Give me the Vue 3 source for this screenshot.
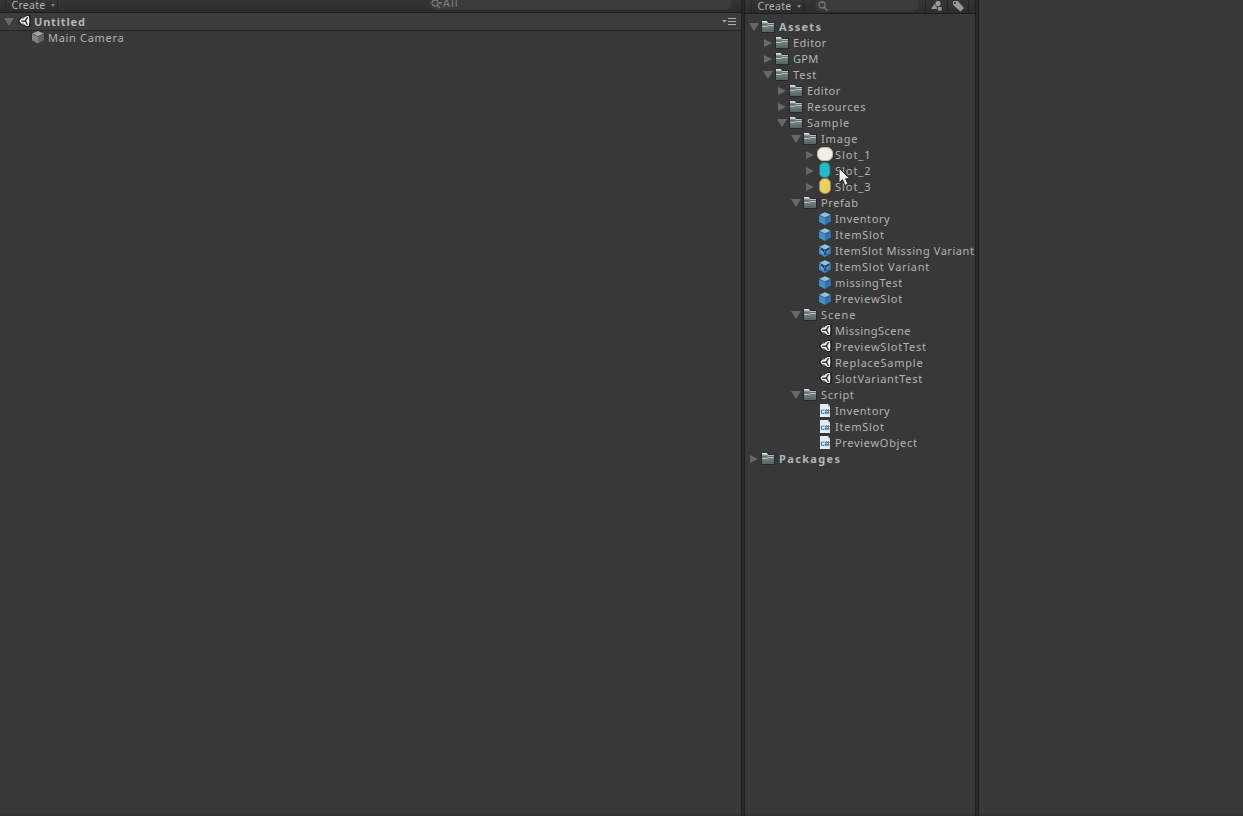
<script setup>
const tree = [
  ['Assets', 0, 'folder', 'open', 1.28, true], ['Editor', 1, 'folder', 'closed', 0.48], ['GPM', 1, 'folder', 'closed', 0.3],
  ['Test', 1, 'folder', 'open', 0.85], ['Editor', 2, 'folder', 'closed', 0.48], ['Resources', 2, 'folder', 'closed', 0.7],
  ['Sample', 2, 'folder', 'open', 0.78], ['Image', 3, 'folder', 'open', 0.82],
  ['Slot_1', 4, 'white', 'closed', 0.95], ['Slot_2', 4, 'cyan', 'closed', 0.95], ['Slot_3', 4, 'yellow', 'closed', 0.95],
  ['Prefab', 3, 'folder', 'open', 0.6], ['Inventory', 4, 'cube', '', 0.6], ['ItemSlot', 4, 'cube', '', 0.75],
  ['ItemSlot Missing Variant', 4, 'variant', '', 0.56], ['ItemSlot Variant', 4, 'variant', '', 0.72],
  ['missingTest', 4, 'cube', '', 0.63], ['PreviewSlot', 4, 'cube', '', 0.76],
  ['Scene', 3, 'folder', 'open', 0.98], ['MissingScene', 4, 'unity', '', 0.46], ['PreviewSlotTest', 4, 'unity', '', 0.76],
  ['ReplaceSample', 4, 'unity', '', 0.75], ['SlotVariantTest', 4, 'unity', '', 0.72],
  ['Script', 3, 'folder', 'open', 0.68], ['Inventory', 4, 'script', '', 0.6], ['ItemSlot', 4, 'script', '', 0.75], ['PreviewObject', 4, 'script', '', 0.69],
  ['Packages', 0, 'folder', 'closed', 1.36, true],
].map(([name, depth, icon, arrow, tracking, bold]) => ({ name, depth, icon, arrow, tracking, bold }))
</script>

<template>
  <svg class="defs" width="0" height="0">
    <defs>
      <linearGradient id="fg" x2="0" y2="1"><stop stop-color="#8e9b9e" /><stop offset="1" stop-color="#566266" /></linearGradient>
      <symbol id="folder" viewBox="0 0 16 16">
        <path d="M1 4V3Q1 2 2 2h5q1 0 1 1h6q1 0 1 1v9q0 1-1 1H2q-1 0-1-1z" fill="#252828" />
        <path d="M2 2h5l1 2h6v9H2z" fill="url(#fg)" />
        <path d="M2 2h5v1.5H2z" fill="#dcdfdc" />
        <path d="M2 3.5h5.5l.5 1h6" fill="none" stroke="#b9c1c1" stroke-width="1" />
        <path d="M2 5.5h4.5M8 5.5h6" stroke="#616d70" stroke-width="1" />
        <path d="M2 7.5h5l1-1h6" fill="none" stroke="#b4bdbe" stroke-width="1" />
      </symbol>
      <symbol id="cube" viewBox="0 0 16 16">
        <path d="M8 1l6.5 3v7L8 14.5 1.5 11V4z" fill="#233947" />
        <path d="M8 1.3l5.7 2.5L8 6.5 2.3 3.8z" fill="#8bc5d8" />
        <path d="M2 4.3l6 2.6v7l-6-3.2z" fill="#4a8cc5" />
        <path d="M14 4.3L8 6.9v7l6-3.2z" fill="#3970aa" />
      </symbol>
      <symbol id="variant" viewBox="0 0 16 16">
        <use href="#cube" />
        <path d="M4 6l2.5 1v2M12 6L9 7.2v1.6M8 9v3" fill="none" stroke="#24425a" stroke-width="1.5" />
        <path d="M4 8.5l2.5 1.8M9.5 10L12 7" stroke="#8abddb" />
      </symbol>
      <symbol id="graycube" viewBox="0 0 16 16">
        <path d="M8 .7l6.5 2.8v7L8 14.5l-6.5-4v-7z" fill="#292929" />
        <path d="M8 1L14 3.5 8 6.2 2 3.5z" fill="#a2a2a2" />
        <path d="M2 4l6 2.7v7L2 10.2z" fill="#858585" />
        <path d="M14 4L8 6.7v7l6-3.5z" fill="#666" />
      </symbol>
      <symbol id="unity" viewBox="0 0 16 16">
        <path d="M1.8 7L5 3.4 12.6.7l1.6.8.5 5.5-.5 5.5-1.6.8L5 10.8z" fill="#141414" />
        <path d="M3.2 7L6 3.7l6-1.9 1 .6.4 4.6-.4 4.6-1 .6-6-1.9z" fill="#f0f0ec" />
        <path d="M5.2 7h4.2l2.1-3.8M9.4 7l2.1 3.8" fill="none" stroke="#141414" stroke-width="1.25" />
        <path d="M6.4 4.6L8.7 3M6.4 9.4L8.7 11" fill="none" stroke="#141414" stroke-width=".9" />
      </symbol>
      <symbol id="script" viewBox="0 0 16 16">
        <path d="M3 1h8l2 2.5V14H3z" fill="#e9ebea" />
        <path d="M11 1v2.5h2z" fill="#a4a9aa" />
        <path d="M7.2 7H5.5Q4.3 7 4.3 8v1.5q0 1 1.2 1h1.7M9.2 6l-.5 5.2M11.5 6l-.5 5.2M7.8 7.5h4.8M7.6 9.7h4.8" fill="none" stroke="#4a80ad" stroke-width="1.2" />
      </symbol>
      <symbol id="white" viewBox="0 0 16 16"><rect x=".5" y=".5" width="15" height="13" rx="5.5" fill="#eeefe9" stroke="#c8bd85" /></symbol>
      <symbol id="cyan" viewBox="0 0 16 16"><rect x="2.5" y="-.5" width="10.5" height="15" rx="4.5" fill="#29b7cc" stroke="#23717a" /></symbol>
      <symbol id="yellow" viewBox="0 0 16 16"><rect x="2.5" y="-.5" width="11" height="15" rx="5" fill="#e9cf69" stroke="#9b8547" /></symbol>
    </defs>
  </svg>
  <main class="window">
    <section class="hierarchy">
      <header class="toolbar left-tools">
        <button class="create">Create<i class="caret" /></button>
        <div class="search all">
          <svg width="13" height="11"><circle cx="5" cy="4" r="3" /><path d="M7 6l3 3" /><path class="solid" d="M8 3h4.5L10.2 5.5z" /></svg>All
        </div>
      </header>
      <div class="scene">
        <i class="arrow open" />
        <svg class="icon"><use href="#unity" /></svg>
        <b>Untitled</b>
        <svg class="menu" width="14" height="9"><path d="M0 3h5L2.5 5.5z" fill="#aaa" /><path d="M6 1.5h8M6 4.5h8M6 7.5h8" stroke="#aaa" /></svg>
      </div>
      <div class="camera"><svg class="icon"><use href="#graycube" /></svg><span>Main Camera</span></div>
    </section>
    <div class="divider" />
    <section class="project">
      <header class="toolbar right-tools">
        <button class="create">Create<i class="caret" /></button>
        <div class="search"><svg width="11" height="11"><circle cx="4" cy="4" r="3" /><path d="M6 6l3.5 3.5" /></svg></div>
        <button class="tool"><svg width="14" height="12"><path d="M1 8l3.5-5L8 8z" /><circle cx="8" cy="2.5" r="2.6" /><path class="gap" d="M7.5 5.5h4.5v4.5H7.5z" /></svg></button>
        <button class="tool"><svg width="14" height="12"><path fill-rule="evenodd" d="M1 0h5l6 7-3.5 3.5L1 4zM3 1a1 1 0 100 2 1 1 0 000-2z" /></svg></button>
      </header>
      <div class="tree">
        <div v-for="(item, n) in tree" :key="n" class="row" :class="['depth' + item.depth, { bold: item.bold }]">
          <i class="arrow" :class="item.arrow" />
          <svg class="icon"><use :href="'#' + item.icon" /></svg>
          <span :style="{ letterSpacing: item.tracking + 'px' }">{{ item.name }}</span>
        </div>
      </div>
    </section>
    <div class="divider" />
    <aside />
    <svg class="cursor" width="13" height="20" viewBox="0 0 13 20"><path d="M1 1v15l3.5-3.2L7 18.5l3-1.3-2.4-5.4H12z" fill="#f1f1f1" stroke="#222" /></svg>
  </main>
</template>

<style>
body { margin: 0; background: #383838; overflow: hidden; }
</style>
<style scoped>
.defs { position: absolute; }
.window { position: relative; display: flex; width: 1243px; height: 816px; overflow: hidden; background: linear-gradient(#383838 813px, #363536 814px, #342f31); color: #b4b4b4; font: 11px/16px "Noto Sans", sans-serif; letter-spacing: .82px; white-space: nowrap; }
.hierarchy { width: 741px; flex: none; }
.divider { box-sizing: border-box; width: 4px; height: 816px; flex: none; border: solid #1f1f1f; border-width: 0 1px; background: #292929; }
.project { width: 230px; flex: none; }
aside { flex: 1; }
.toolbar { display: flex; box-sizing: border-box; overflow: hidden; background: linear-gradient(#353535, #2c2c2c); border-bottom: 1px solid #1d1d1d; }
.left-tools { height: 13px; }
.right-tools { height: 14px; }
button { padding: 0; border: 0; background: none; color: inherit; font: inherit; letter-spacing: inherit; }
.create { display: flex; align-items: center; box-sizing: border-box; height: 16px; border: solid #252525; border-width: 0 1px; font-size: 10.5px; letter-spacing: .3px; }
.left-tools .create { width: 53px; margin: -3px 0 0 5px; padding-left: 5.5px; }
.right-tools .create { width: 53px; margin: -2px 0 0 6px; padding-left: 5.5px; }
.caret { margin-left: 5px; border: solid transparent; border-width: 3px 2.5px 0; border-top-color: #888; }
.search { box-sizing: border-box; display: flex; background: #3c3c3c; border-radius: 7px; box-shadow: inset 0 0 2px #202020; color: #828282; overflow: hidden; }
.search svg { fill: none; stroke: #777; stroke-width: 1.3; flex: none; }
.search .solid { fill: #777; stroke: none; }
.all { width: 305px; height: 16px; margin: -6px 0 0 370px; padding: 1px 0 0 2px; letter-spacing: 1px; }
.all svg { margin-top: 4px; }
.right-tools .search { width: 106px; height: 14px; margin: -2px 0 0 10px; padding: 3px 0 0 4px; }
.tool { width: 22px; height: 14px; border-left: 1px solid #232323; fill: #999; }
.tool:nth-of-type(2) { margin-left: 5px; }
.tool:last-child { border-right: 1px solid #232323; }
.tool svg { display: block; margin-left: 4px; }
.gap { stroke: #303030; stroke-width: .8; }
.scene { display: flex; align-items: center; box-sizing: border-box; height: 18px; padding: 0 5px 0 3px; border-bottom: 1px solid #252525; background: #3c3c3c; }
.scene .icon { margin-left: 1px; }
.scene b { margin-left: 2px; }
.menu { margin-left: auto; }
.camera { display: flex; align-items: center; height: 16px; margin-top: -1px; padding-left: 30px; letter-spacing: .68px; }
.camera span { margin-left: 2px; }
.tree { padding-top: 5px; }
.row { display: flex; align-items: center; height: 16px; padding-left: 3px; }
.row span { margin-left: 3px; }
.depth1 { padding-left: 17px; } .depth2 { padding-left: 31px; } .depth3 { padding-left: 45px; } .depth4 { padding-left: 59px; }
.depth4 .icon { margin: 0 -1px 0 1px; }
.bold { font-weight: bold; }
.arrow { width: 12px; height: 12px; display: flex; align-items: center; justify-content: center; flex: none; }
.arrow::before { content: ""; }
.open::before { border: solid transparent; border-width: 8px 5px 0; border-top-color: #686868; }
.closed::before { border: solid transparent; border-width: 4.5px 0 4.5px 8px; border-left-color: #686868; }
.icon { width: 16px; height: 16px; flex: none; overflow: visible; }
symbol { overflow: visible; }
.cursor { position: absolute; left: 838px; top: 167px; }
</style>
